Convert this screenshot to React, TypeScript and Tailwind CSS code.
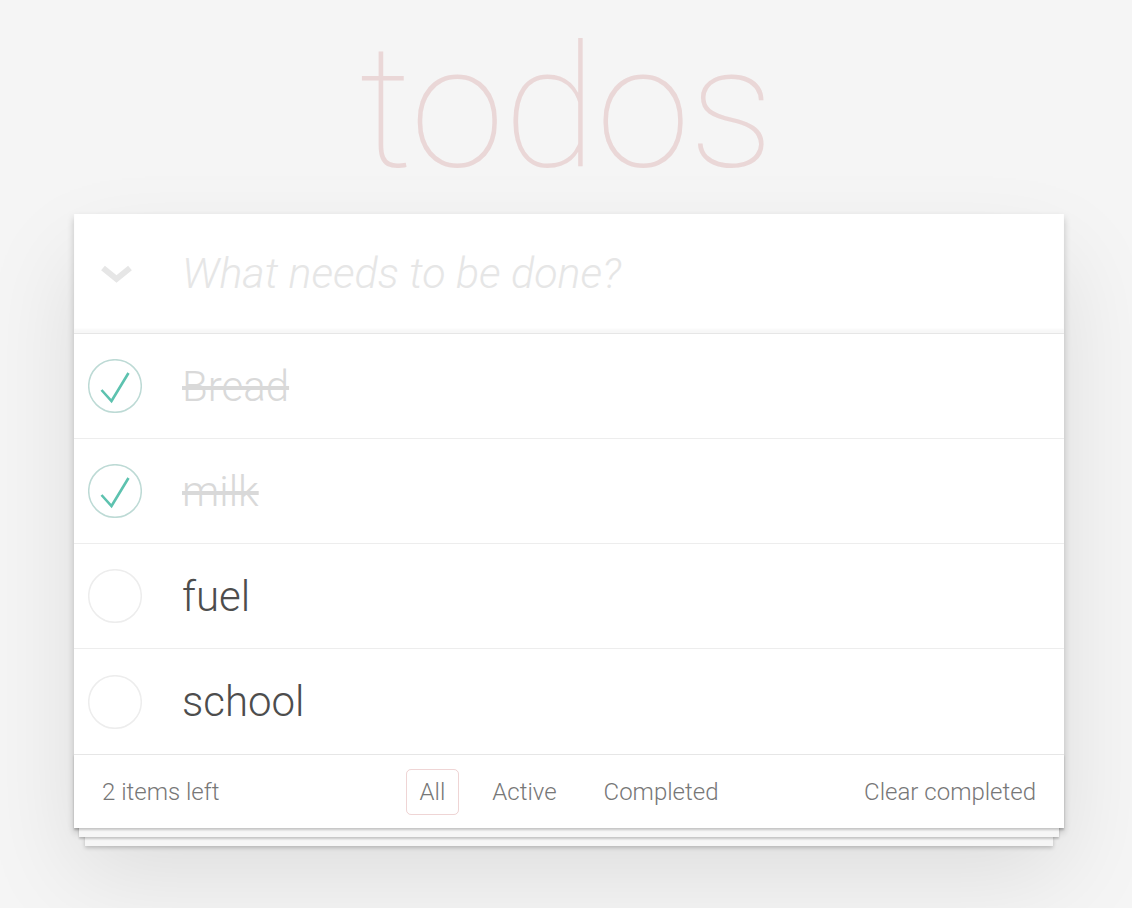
type Todo = { title: string; done: boolean };

const todos: Todo[] = [
  { title: "Bread", done: true },
  { title: "milk", done: true },
  { title: "fuel", done: false },
  { title: "school", done: false },
];

const Toggle = ({ done }: { done: boolean }) => (
  <svg width="54" height="54" viewBox="0 0 54 54" className="shrink-0">
    <circle cx="27" cy="27" r="26.3" fill="none" stroke={done ? "#bddad5" : "#ededed"} strokeWidth="1.5" />
    {done && (
      <polyline
        points="13.5,31 23.5,42 40.5,14"
        fill="none"
        stroke="#5dc2af"
        strokeWidth="2.6"
      />
    )}
  </svg>
);

const App = () => {
  return (
    <div className="min-h-[908px] bg-[#f5f5f5] font-['Roboto',sans-serif] font-light">
      <h1 className="pt-[22px] h-[194px] text-center text-[171px] leading-none font-thin text-[rgba(175,47,47,0.15)] tracking-[-1px]">
        todos
      </h1>
      <section className="w-[990px] ml-[74px] mt-[20px] bg-white shadow-[0_4px_7px_rgba(0,0,0,0.2),0_45px_90px_rgba(0,0,0,0.1)]">
        <header className="flex items-center h-[120px] border-b border-[#e6e6e6] shadow-[inset_0_-4px_2px_rgba(0,0,0,0.03)]">
          <div className="w-[108px] pl-[27px]">
            <svg width="31" height="20" viewBox="0 0 31 20" className="block">
              <polyline points="2,4 15.5,15 29,4" fill="none" stroke="#e6e6e6" strokeWidth="6" />
            </svg>
          </div>
          <span className="text-[43px] italic font-light text-[#e6e6e6]">What needs to be done?</span>
        </header>
        <ul>
          {todos.map((t) => (
            <li key={t.title} className="flex items-center h-[105px] pl-[14px] border-b border-[#ededed] last:border-b-0">
              <Toggle done={t.done} />
              <span
                className={
                  t.done
                    ? "ml-[40px] text-[42px] text-[#d9d9d9] line-through decoration-[#d9d9d9]"
                    : "ml-[40px] text-[42px] text-[#4d4d4d]"
                }
              >
                {t.title}
              </span>
            </li>
          ))}
        </ul>
        <footer className="grid grid-cols-[1fr_auto_1fr] items-center h-[74px] px-[28px] border-t border-[#e6e6e6] text-[24px] text-[#777] bg-white shadow-[0_2px_2px_rgba(0,0,0,0.2),0_14px_0_-5px_#f6f6f6,0_16px_2px_-5px_rgba(0,0,0,0.2),0_29px_0_-11px_#f6f6f6,0_31px_4px_-11px_rgba(0,0,0,0.2)]">
          <span>2 items left</span>
          <div className="flex items-center gap-[19px]">
            <span className="px-[13px] py-[4px] border border-[rgba(175,47,47,0.2)] rounded-[5px]">All</span>
            <span className="px-[13px] py-[4px] border border-transparent">Active</span>
            <span className="px-[13px] py-[4px] border border-transparent">Completed</span>
          </div>
          <span className="justify-self-end">Clear completed</span>
        </footer>
      </section>
    </div>
  );
};

export default App;
